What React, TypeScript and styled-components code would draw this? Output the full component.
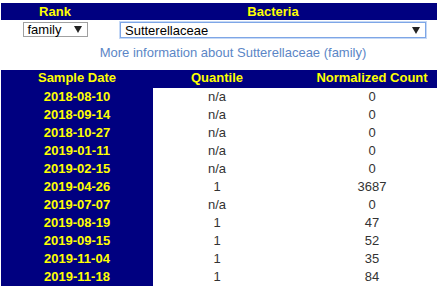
import React from 'react';
import styled, {createGlobalStyle} from 'styled-components';

const GlobalStyle = createGlobalStyle`
  body {
    margin: 0;
    background: #fff;
    font-family: "Liberation Sans", Arial, sans-serif;
    font-size: 13px;
    color: #333;
  }
`;

const NAVY = '#000080';
const YELLOW = '#ffff00';

const Page = styled.div`
  width: 436px;
  padding: 3px 0 0 1px;
`;

const PickerTable = styled.div`
  display: grid;
  grid-template-columns: 108px 328px;
`;

const HeadCell = styled.div<{align?: string; pad?: number}>`
  background: ${NAVY};
  color: ${YELLOW};
  font-weight: bold;
  text-align: ${props => props.align || 'center'};
  padding-left: ${props => props.pad || 0}px;
  height: 17px;
  line-height: 17px;
`;

const PickerCell = styled.div<{justify?: string}>`
  display: flex;
  justify-content: ${props => props.justify || 'center'};
  align-items: flex-start;
  padding-top: 2px;
  height: 16px;
`;

const FakeSelect = styled.div<{width: number; focused?: boolean}>`
  box-sizing: border-box;
  width: ${props => props.width}px;
  height: ${props => (props.focused ? 16 : 15)}px;
  display: flex;
  align-items: center;
  justify-content: space-between;
  padding: 0 3px 0 4px;
  background: #fff;
  color: #000;
  font-size: 13px;
  line-height: 13px;
  border: 1px solid ${props => (props.focused ? '#7ea6e6' : '#a0a0a0')};
  box-shadow: ${props => (props.focused ? '0 0 0 1px #c6d9f6' : 'none')};
`;

const Arrow = styled.span`
  width: 0;
  height: 0;
  border-left: 4px solid transparent;
  border-right: 4px solid transparent;
  border-top: 7px solid #222;
  margin-right: 2px;
`;

const InfoRow = styled.div`
  text-align: center;
  padding-left: 28px;
  margin-top: 7px;
  height: 25px;
  line-height: 15px;
`;

const InfoLink = styled.a`
  color: #5b86c6;
  text-decoration: none;
`;

const SampleTable = styled.div`
  display: grid;
  grid-template-columns: 152px 128px 156px;
  margin-top: 0;
`;

const DateCell = styled.div`
  background: ${NAVY};
  color: ${YELLOW};
  font-weight: bold;
  text-align: center;
  height: 18px;
  line-height: 17px;
`;

const ValueCell = styled.div<{pad?: number}>`
  background: #fff;
  color: #333;
  text-align: center;
  padding-left: ${props => props.pad || 0}px;
  height: 18px;
  line-height: 17px;
`;

const TableHead = styled(HeadCell)`
  height: 18px;
  line-height: 16px;
`;

const rows: [string, string, string][] = [
  ['2018-08-10', 'n/a', '0'],
  ['2018-09-14', 'n/a', '0'],
  ['2018-10-27', 'n/a', '0'],
  ['2019-01-11', 'n/a', '0'],
  ['2019-02-15', 'n/a', '0'],
  ['2019-04-26', '1', '3687'],
  ['2019-07-07', 'n/a', '0'],
  ['2019-08-19', '1', '47'],
  ['2019-09-15', '1', '52'],
  ['2019-11-04', '1', '35'],
  ['2019-11-18', '1', '84']
];

export default function App() {
  return (
    <Page>
      <GlobalStyle />
      <PickerTable>
        <HeadCell>Rank</HeadCell>
        <HeadCell>Bacteria</HeadCell>
        <PickerCell>
          <FakeSelect width={65}>
            family
            <Arrow />
          </FakeSelect>
        </PickerCell>
        <PickerCell>
          <FakeSelect width={306} focused>
            Sutterellaceae
            <Arrow />
          </FakeSelect>
        </PickerCell>
      </PickerTable>
      <InfoRow>
        <InfoLink href="#">More information about Sutterellaceae (family)</InfoLink>
      </InfoRow>
      <SampleTable>
        <TableHead>Sample Date</TableHead>
        <TableHead pad={0}>Quantile</TableHead>
        <TableHead pad={26}>Normalized Count</TableHead>
        {rows.map(([date, q, count]) => (
          <React.Fragment key={date}>
            <DateCell>{date}</DateCell>
            <ValueCell>{q}</ValueCell>
            <ValueCell pad={26}>{count}</ValueCell>
          </React.Fragment>
        ))}
      </SampleTable>
    </Page>
  );
}
